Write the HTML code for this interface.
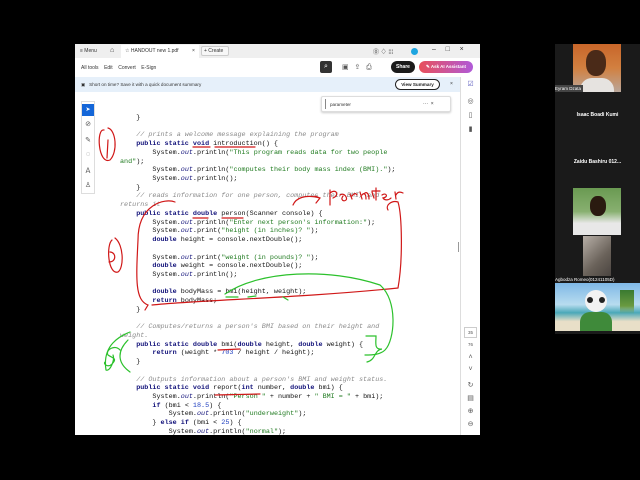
<!DOCTYPE html>
<html><head><meta charset="utf-8"><style>
*{margin:0;padding:0;box-sizing:border-box}
body{width:640px;height:480px;background:#000;position:relative;overflow:hidden;font-family:"Liberation Sans",sans-serif}
.a{position:absolute}
.win{left:75px;top:44px;width:405px;height:391px;background:#fff}
pre{position:absolute;left:0;top:0;font-family:"Liberation Mono",monospace;font-size:6.75px;line-height:8.72px;color:#111;white-space:pre}
.k{color:#12127a;font-weight:bold}.s{color:#1f7a1f}.c{color:#8a8a8a;font-style:italic}.o{color:#12127a;font-style:italic}.n{color:#2040c0}
.sm{font-size:5px;color:#333;white-space:nowrap}
.ic{font-size:7px;color:#555;text-align:center;width:19px}
.nm{color:#fff;font-size:5px;font-weight:bold;text-align:center;white-space:nowrap}
</style></head><body>
<div class="a win">
 <div class="a" style="left:0;top:0;width:405px;height:14px;background:#efefef"></div>
 <div class="a sm" style="left:5px;top:4px">≡ Menu</div>
 <div class="a sm" style="left:35px;top:3px;font-size:7px">⌂</div>
 <div class="a" style="left:46px;top:1px;width:78px;height:13px;background:#fff"></div>
 <div class="a sm" style="left:50px;top:4px">☆ HANDOUT new 1.pdf</div>
 <div class="a sm" style="left:117px;top:4px">×</div>
 <div class="a" style="left:126px;top:2px;width:28px;height:10px;border:1px solid #ccc;border-radius:2px;background:#f7f7f7"></div>
 <div class="a sm" style="left:129px;top:4px">+ Create</div>
 <div class="a sm" style="left:298px;top:3px;font-size:6px">⓪ ♢ ⁞⁞⁞</div>
 <div class="a" style="left:336px;top:4px;width:7px;height:7px;border-radius:50%;background:#1ea5e0"></div>
 <div class="a sm" style="left:357px;top:2px;font-size:7px">–&nbsp;&nbsp;&nbsp;&nbsp;&nbsp;□&nbsp;&nbsp;&nbsp;&nbsp;&nbsp;×</div>
 <div class="a sm" style="left:6px;top:21px">All tools&nbsp;&nbsp;&nbsp;&nbsp;Edit&nbsp;&nbsp;&nbsp;&nbsp;Convert&nbsp;&nbsp;&nbsp;&nbsp;E-Sign</div>
 <div class="a" style="left:245px;top:17px;width:12px;height:12px;background:#333;border-radius:2px;color:#fff;font-size:7px;text-align:center;line-height:12px">⌕</div>
 <div class="a sm" style="left:267px;top:19px;font-size:7px;color:#555">▣&nbsp;&nbsp;&nbsp;⇪&nbsp;&nbsp;&nbsp;⎙</div>
 <div class="a" style="left:316px;top:17px;width:24px;height:12px;background:#1b1b1b;border-radius:6px;color:#fff;font-size:5px;font-weight:bold;text-align:center;line-height:12px">Share</div>
 <div class="a" style="left:344px;top:17px;width:54px;height:12px;background:linear-gradient(90deg,#e8505b,#b05ad8);border-radius:6px;color:#fff;font-size:4.5px;font-weight:bold;text-align:center;line-height:12px">✎ Ask AI Assistant</div>
 <div class="a" style="left:0;top:33px;width:386px;height:15px;background:#e6f0fa"></div>
 <div class="a sm" style="left:6px;top:38px;font-size:4.6px">▣&nbsp;&nbsp; Short on time? Save it with a quick document summary</div>
 <div class="a" style="left:320px;top:35px;width:45px;height:11px;border:1px solid #222;border-radius:6px;background:#fff;font-size:4.6px;text-align:center;line-height:9px;font-weight:bold;color:#222">View Summary</div>
 <div class="a sm" style="left:375px;top:37px">×</div>
 <div class="a" style="left:385px;top:33px;width:1px;height:358px;background:#ddd"></div>
 <div class="a ic" style="left:386px;top:36px;color:#6060c0">☑</div>
 <div class="a ic" style="left:386px;top:53px">◎</div>
 <div class="a ic" style="left:386px;top:67px">▯</div>
 <div class="a ic" style="left:386px;top:81px">▮</div>
 <div class="a" style="left:389px;top:283px;width:13px;height:11px;border:1px solid #ccc;font-size:4.5px;text-align:center;line-height:10px;color:#555">35</div>
 <div class="a ic" style="left:386px;top:298px;font-size:4.5px">76</div>
 <div class="a ic" style="left:386px;top:310px">˄</div>
 <div class="a ic" style="left:386px;top:322px">˅</div>
 <div class="a ic" style="left:386px;top:337px">↻</div>
 <div class="a ic" style="left:386px;top:350px">▤</div>
 <div class="a ic" style="left:386px;top:363px">⊕</div>
 <div class="a ic" style="left:386px;top:376px">⊖</div>
 <div class="a" style="left:383px;top:198px;width:1px;height:10px;background:#999"></div>
 <div class="a" style="left:6px;top:57px;width:14px;height:93px;border:1px solid #ddd;background:#fff"></div>
 <div class="a" style="left:7px;top:60px;width:12px;height:12px;background:#1466d8;color:#fff;font-size:6px;text-align:center;line-height:12px">➤</div>
 <div class="a ic" style="left:3px;top:76px;width:20px">⊘</div>
 <div class="a ic" style="left:3px;top:92px;width:20px">✎</div>
 <div class="a ic" style="left:3px;top:107px;width:20px">◌</div>
 <div class="a ic" style="left:3px;top:122px;width:20px">Ａ</div>
 <div class="a ic" style="left:3px;top:137px;width:20px">♙</div>
 <div class="a" style="left:246px;top:52px;width:130px;height:16px;border:1px solid #ddd;border-radius:2px;background:#fff;box-shadow:0 1px 2px #ccc"></div>
 <div class="a" style="left:250px;top:55px;width:1px;height:10px;background:#888"></div>
 <div class="a sm" style="left:255px;top:58px;font-size:4.6px">parameter</div>
 <div class="a sm" style="left:348px;top:57px">··· &nbsp;×</div>
 <pre style="left:45px;top:70px">    }

    <span class="c">// prints a welcome message explaining the program</span>
    <span class="k">public static void</span> introduction() {
        System.<span class="o">out</span>.println(<span class="s">"This program reads data for two people</span>
<span class="s">and"</span>);
        System.<span class="o">out</span>.println(<span class="s">"computes their body mass index (BMI)."</span>);
        System.<span class="o">out</span>.println();
    }
    <span class="c">// reads information for one person, computes their BMI, and</span>
<span class="c">returns it</span>
    <span class="k">public static double</span> person(Scanner console) {
        System.<span class="o">out</span>.println(<span class="s">"Enter next person's information:"</span>);
        System.<span class="o">out</span>.print(<span class="s">"height (in inches)? "</span>);
        <span class="k">double</span> height = console.nextDouble();

        System.<span class="o">out</span>.print(<span class="s">"weight (in pounds)? "</span>);
        <span class="k">double</span> weight = console.nextDouble();
        System.<span class="o">out</span>.println();

        <span class="k">double</span> bodyMass = bmi(height, weight);
        <span class="k">return</span> bodyMass;
    }

    <span class="c">// Computes/returns a person's BMI based on their height and</span>
<span class="c">weight.</span>
    <span class="k">public static double</span> bmi(<span class="k">double</span> height, <span class="k">double</span> weight) {
        <span class="k">return</span> (weight * <span class="n">703</span> / height / height);
    }

    <span class="c">// Outputs information about a person's BMI and weight status.</span>
    <span class="k">public static void</span> report(<span class="k">int</span> number, <span class="k">double</span> bmi) {
        System.<span class="o">out</span>.println(<span class="s">"Person "</span> + number + <span class="s">" BMI = "</span> + bmi);
        <span class="k">if</span> (bmi &lt; <span class="n">18.5</span>) {
            System.<span class="o">out</span>.println(<span class="s">"underweight"</span>);
        } <span class="k">else if</span> (bmi &lt; <span class="n">25</span>) {
            System.<span class="o">out</span>.println(<span class="s">"normal"</span>);</pre>
</div>
<svg class="a" style="left:0;top:0" width="640" height="480" fill="none" stroke-linecap="round">
 <g stroke="#d01818" stroke-width="1.2">
  <path d="M104 130 C96 128 98 165 110 160 C118 152 116 130 108 128 M108 140 L107 158"/>
  <path d="M193 147 L210 147 M215 147 L255 147"/>
  <path d="M193 218 L208 218 M222 218 L243 218"/>
  <path d="M112 240 C106 245 108 275 118 272 C124 268 124 245 115 238 M110 252 C116 252 117 262 109 262"/>
  <path d="M175 202 C165 198 138 204 138 240 C136 280 135 300 148 305 L145 310 M152 305 C200 300 300 298 398 288 C403 260 402 215 398 202 C392 200 385 205 388 210"/>
  <path d="M293 205 C296 198 305 194 320 198 M315 196 L320 198 L316 203"/>
  <path d="M330 190 L330 205 M330 193 C336 188 340 195 333 198 M340 195 C344 192 348 198 346 200 C344 202 340 200 343 196 M350 194 L352 199 M352 196 C354 193 356 193 357 195 M360 192 L362 199 M362 195 C364 192 366 194 366 199 M364 194 C366 191 369 193 369 199 M372 192 L374 198 M376 188 L376 200 M372 191 L380 191 M382 195 C386 192 389 197 383 198 C385 201 389 200 391 198 M395 192 L396 199 M396 195 C398 191 401 192 403 193"/>
  <path d="M218 350 L240 349 M215 395 L260 394"/>
 </g>
 <g stroke="#2cc12c" stroke-width="1.2">
  <path d="M225 294 C260 270 330 268 380 285 C398 300 395 340 385 350 C380 355 372 355 365 355"/>
  <path d="M226 297 L238 297 M248 297 L256 296 M283 297 L288 300"/>
  <path d="M366 336 L376 336 C376 343 374 350 382 349 C374 350 376 360 367 362"/>
  <path d="M130 332 C120 336 102 345 106 370 C110 372 115 360 113 355 M120 350 C115 344 105 350 108 355 C112 358 118 358 112 364 C108 368 103 364 105 362 M128 340 C118 350 116 362 130 372"/>
 </g>
</svg>
<div class="a" style="left:555px;top:44px;width:85px;height:290px;background:#1a1a1a"></div>
<div class="a" style="left:573px;top:44px;width:48px;height:48px;background:linear-gradient(180deg,#c8662a,#d28040 50%,#b9a69a)"></div>
<div class="a" style="left:586px;top:50px;width:20px;height:26px;border-radius:45%;background:#4a2a18"></div>
<div class="a" style="left:580px;top:78px;width:34px;height:14px;border-radius:12px 12px 0 0;background:#e6e3e0"></div>
<div class="a" style="left:555px;top:85px;width:28px;height:7px;background:#444;color:#fff;font-size:4.5px;line-height:7px;white-space:nowrap">Eyram Dzata</div>
<div class="a nm" style="left:555px;top:112px;width:85px">Isaac Boadi Kumi</div>
<div class="a nm" style="left:555px;top:159px;width:85px">Zaidu Bashiru 012...</div>
<div class="a" style="left:573px;top:188px;width:48px;height:47px;background:linear-gradient(180deg,#6a9a52,#88b070 50%,#e8e8e8 75%)"></div>
<div class="a" style="left:590px;top:196px;width:16px;height:20px;border-radius:45%;background:#2a1a10"></div>
<div class="a" style="left:583px;top:236px;width:28px;height:40px;background:linear-gradient(135deg,#b8b0a8,#6a625a 60%,#4a4440)"></div>
<div class="a" style="left:555px;top:276px;width:85px;height:7px;color:#fff;font-size:4.5px;line-height:7px;white-space:nowrap">Agbodza Romeo(01241105D)</div>
<div class="a" style="left:555px;top:283px;width:85px;height:48px;background:linear-gradient(180deg,#7fb8e6,#b8dcef 45%,#4aa8b8 62%,#e8dfc8 80%)"></div>
<div class="a" style="left:585px;top:290px;width:22px;height:22px;border-radius:50%;background:#f2f2f2"></div>
<div class="a" style="left:587px;top:297px;width:6px;height:6px;border-radius:50%;background:#222"></div>
<div class="a" style="left:599px;top:297px;width:6px;height:6px;border-radius:50%;background:#222"></div>
<div class="a" style="left:580px;top:312px;width:32px;height:19px;border-radius:10px 10px 0 0;background:#3f8a3a"></div>
<div class="a" style="left:620px;top:290px;width:14px;height:40px;background:linear-gradient(180deg,#3a7a30,#6a9a40 40%,transparent 60%)"></div>
</body></html>
